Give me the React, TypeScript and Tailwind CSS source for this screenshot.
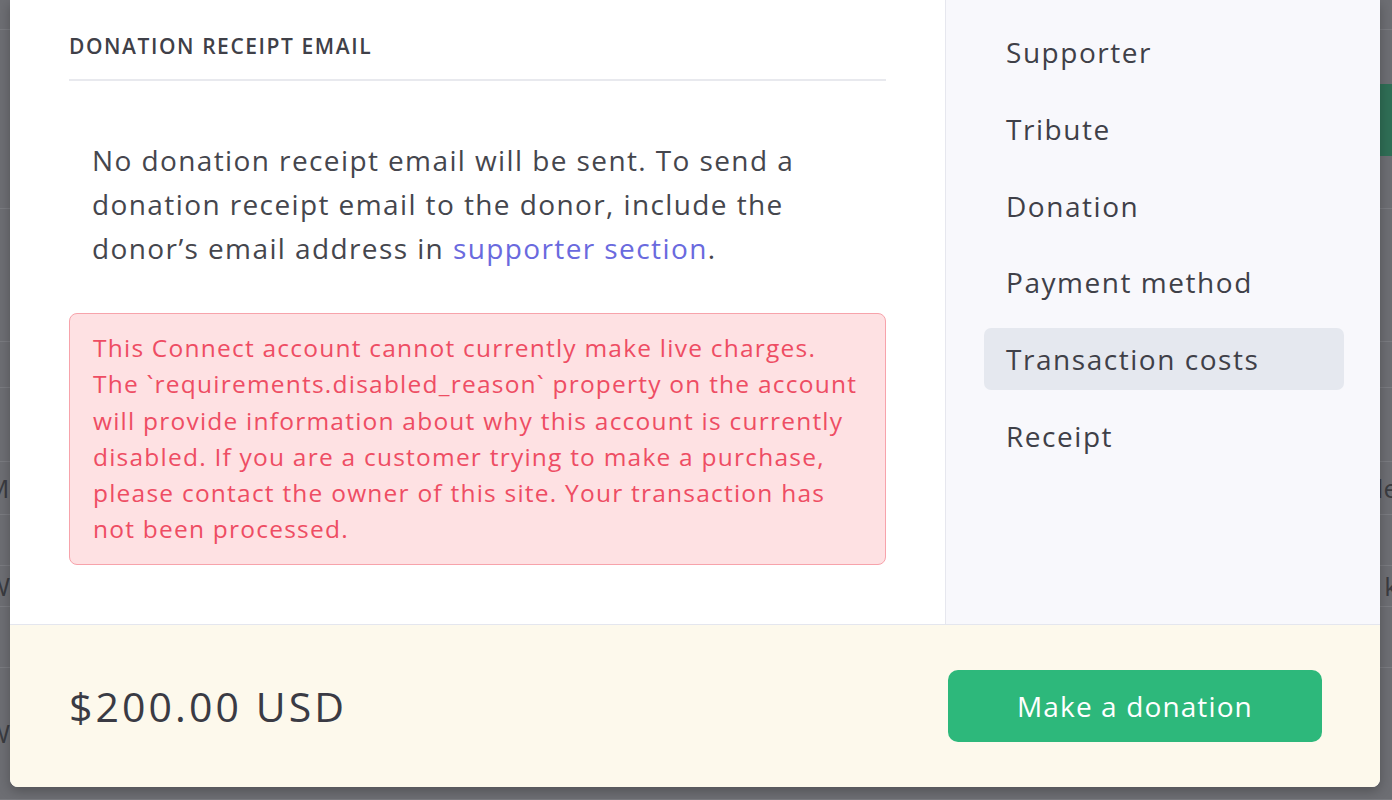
import React from "react";

const navItems = [
  "Supporter",
  "Tribute",
  "Donation",
  "Payment method",
  "Transaction costs",
  "Receipt",
];

const alertLines = [
  "This Connect account cannot currently make live charges.",
  "The `requirements.disabled_reason` property on the account",
  "will provide information about why this account is currently",
  "disabled. If you are a customer trying to make a purchase,",
  "please contact the owner of this site. Your transaction has",
  "not been processed.",
];

// rows of the page sitting under the dimmed backdrop
const backgroundRows = [
  { h: 30, left: "", right: "" },
  { h: 179, left: "", right: "" },
  { h: 133, left: "a", right: "" },
  { h: 46, left: "", right: "" },
  { h: 74, left: "", right: "" },
  { h: 53, left: "M", right: "le" },
  { h: 51, left: "", right: "" },
  { h: 41, left: "W", right: "k" },
  { h: 61, left: "", right: "" },
  { h: 132, left: "W", right: "" },
];

function BackgroundPage() {
  return (
    <div className="absolute inset-0 bg-[#6d6e73]">
      <div className="flex flex-col">
        {backgroundRows.map((row, i) => (
          <div
            key={i}
            className="flex items-center justify-between border-b border-[#7a7b80] text-[26px] text-[#3a3b40]"
            style={{ height: row.h }}
          >
            <span className="-ml-[14px]">{row.left}</span>
            <span className="-mr-[6px]">{row.right}</span>
          </div>
        ))}
      </div>
      <div className="absolute top-[84px] right-0 flex h-[72px] w-[40px] items-center rounded-l-lg bg-[#2f6e55] pl-[8px] text-[26px] text-[#9fc7b4]">
        n
      </div>
    </div>
  );
}

export default function App() {
  return (
    <div
      className="relative h-[800px] w-[1392px] overflow-hidden"
      style={{ fontFamily: '"Open Sans", "Liberation Sans", sans-serif' }}
    >
      <BackgroundPage />

      <div className="absolute left-[10px] top-0 flex h-[787px] w-[1370px] flex-col overflow-hidden rounded-b-[8px] bg-white shadow-[0_4px_12px_rgba(0,0,0,0.25)]">
        <div className="flex min-h-0 flex-1">
          <main className="w-[936px] border-r border-[#e6e7ee] px-[59px] pt-[33px]">
            <h2 className="border-b-2 border-[#e8e9ee] pb-[20px] text-[21px] font-semibold uppercase leading-[26px] tracking-[0.075em] text-[#3f4048]">
              Donation receipt email
            </h2>

            <p className="mt-[57px] px-[23px] text-[28px] leading-[44px] tracking-[0.05em] text-[#45464d]">
              No donation receipt email will be sent. To send a<br />
              donation receipt email to the donor, include the<br />
              donor’s email address in{" "}
              <a href="#" className="text-[#6a6ade]">
                supporter section
              </a>
              .
            </p>

            <div className="mt-[43px] rounded-[8px] border border-[#f7a3ab] bg-[#fee1e3] px-[23px] py-[16px] text-[24.5px] leading-[36.3px] tracking-[0.05em] text-[#ee4d63]">
              {alertLines.map((line) => (
                <div key={line} className="whitespace-nowrap">
                  {line}
                </div>
              ))}
            </div>
          </main>

          <nav className="flex-1 bg-[#f8f8fc] pl-[38px] pr-[36px] pt-[21px]">
            <ul className="flex flex-col gap-[14.8px]">
              {navItems.map((item) => (
                <li
                  key={item}
                  className={`flex h-[62px] items-center rounded-[7px] px-[22px] text-[28px] tracking-[0.055em] text-[#3f4048] ${
                    item === "Transaction costs" ? "bg-[#e5e8ef]" : ""
                  }`}
                >
                  {item}
                </li>
              ))}
            </ul>
          </nav>
        </div>

        <footer className="flex h-[163px] items-center justify-between border-t border-[#e4e6ee] bg-[#fdf9ec] pl-[59px] pr-[58px]">
          <span className="text-[41px] leading-none tracking-[0.075em] text-[#3a3b44]">
            $200.00 USD
          </span>
          <button className="flex h-[72px] w-[374px] items-center justify-center rounded-[10px] bg-[#2db87b] text-[28px] font-medium tracking-[0.04em] text-white">
            Make a donation
          </button>
        </footer>
      </div>
    </div>
  );
}
